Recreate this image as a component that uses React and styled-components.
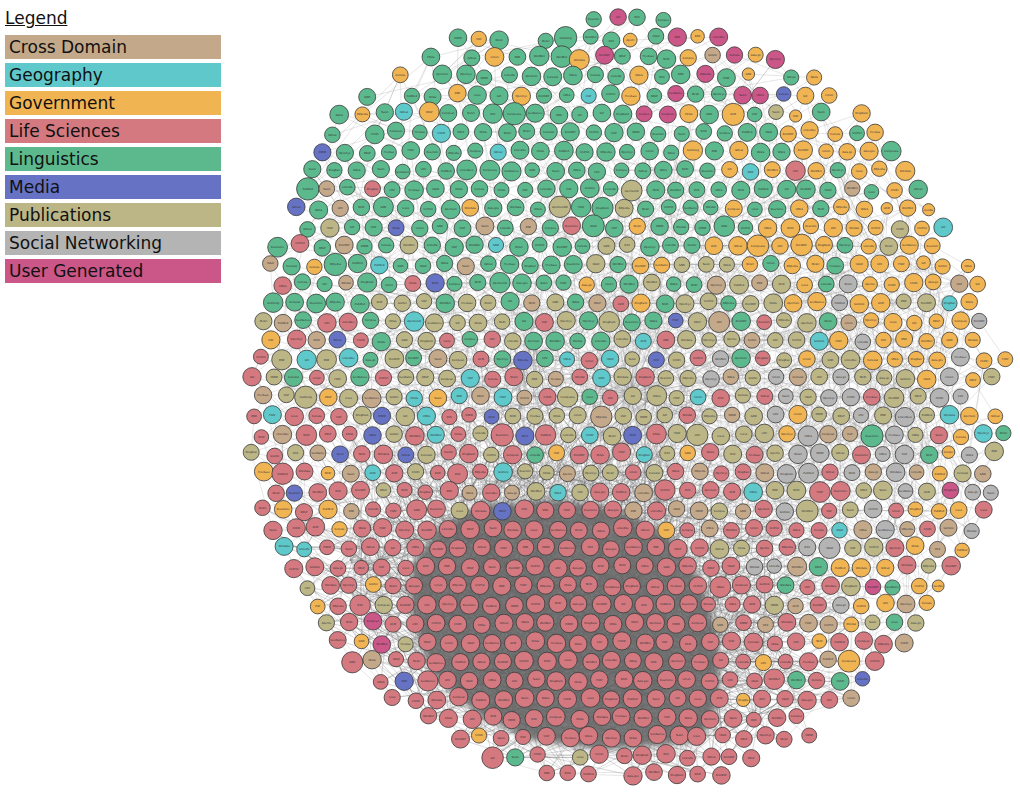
import { useMemo } from "react";
import styled, { createGlobalStyle } from "styled-components";

const GlobalStyle = createGlobalStyle`
  html, body {
    margin: 0;
    padding: 0;
    background: #fff;
  }
  body {
    font-family: "DejaVu Sans", Verdana, sans-serif;
  }
`;

const Page = styled.div`
  display: flex;
  width: 1020px;
  height: 793px;
  overflow: hidden;
  background: #fff;
`;

const Legend = styled.aside`
  flex: none;
  width: 230px;
  box-sizing: border-box;
  padding: 5px 0 0 5px;
  display: flex;
  flex-direction: column;
  gap: 4px;
`;

const LegendTitle = styled.div`
  font-size: 17px;
  line-height: 26px;
  color: #111;
  text-decoration: underline;
`;

const LegendRow = styled.div`
  width: 216px;
  height: 24px;
  box-sizing: border-box;
  padding-left: 4px;
  font-size: 17px;
  line-height: 25px;
  color: #111;
  background: ${(p) => p.$color};
  white-space: nowrap;
`;

const Chart = styled.svg`
  flex: none;
  display: block;
`;

const CATS = [
  { name: "Cross Domain", color: "#c4a88a" },
  { name: "Geography", color: "#5ec8cb" },
  { name: "Government", color: "#f1b453" },
  { name: "Life Sciences", color: "#d4797f" },
  { name: "Linguistics", color: "#5cb98d" },
  { name: "Media", color: "#6672c4" },
  { name: "Publications", color: "#bcb687" },
  { name: "Social Networking", color: "#b4b4b4" },
  { name: "User Generated", color: "#cb5688" },
];
const [CD, GEO, GOV, LS, LING, MED, PUB, SOC, UG] = [0, 1, 2, 3, 4, 5, 6, 7, 8];

// where each domain tends to sit in the layout: [cat, x, y, spreadX, spreadY, weight]
const ZONES = [
  [LING, 510, 165, 200, 105, 14],
  [LING, 800, 240, 60, 50, 2],
  [LING, 850, 600, 60, 60, 1],
  [GOV, 870, 165, 100, 120, 11],
  [GOV, 940, 330, 50, 80, 3],
  [GOV, 430, 60, 60, 35, 3],
  [GOV, 900, 580, 70, 90, 4],
  [GOV, 320, 600, 45, 70, 3],
  [UG, 690, 60, 40, 50, 6],
  [UG, 390, 620, 50, 50, 1],
  [PUB, 620, 370, 230, 72, 9],
  [PUB, 860, 610, 80, 90, 2],
  [PUB, 320, 640, 50, 80, 3],
  [CD, 560, 390, 260, 110, 1.5],
  [CD, 880, 610, 80, 80, 2.5],
  [CD, 330, 610, 50, 60, 1.5],
  [CD, 280, 290, 45, 70, 2.5],
  [LS, 525, 635, 220, 140, 13],
  [LS, 265, 460, 50, 100, 6],
  [SOC, 870, 440, 60, 80, 5],
  [SOC, 810, 520, 40, 50, 2],
  [GEO, 560, 330, 220, 110, 1.4],
  [GEO, 310, 580, 40, 60, 1.5],
  [MED, 440, 390, 220, 140, 0.8],
];
const BASE = [0.1, 0.06, 0.25, 0.1, 0.08, 0.05, 0.08, 0.06, 0.05];

const DARK = [
  [480, 505], [560, 500], [620, 510], [668, 534], [700, 578], [718, 636],
  [720, 696], [702, 742], [600, 750], [530, 740], [480, 716], [432, 674],
  [412, 620], [412, 565], [440, 525],
];
const HALO = [
  [430, 480], [600, 470], [720, 500], [790, 560], [790, 700], [730, 760],
  [560, 770], [440, 740], [360, 660], [330, 580], [370, 510],
];

const NAMES = [
  "DBpedia", "GeoNames", "Wikidata", "UniProt", "Bio2RDF", "lexvo", "DBLP",
  "FOAF", "LinkedGeo", "OpenCyc", "YAGO", "GND", "VIAF", "MeSH", "ChEBI",
  "KEGG", "OMIM", "Reactome", "PubMed", "BNB", "Europeana", "DrugBank",
  "Freebase", "LOV", "lemon", "WordNet", "ACM", "IEEE", "data.gov", "Eurostat",
  "GO", "NCBI", "Taxon", "ISOcat", "Glottolog", "WALS", "ApertiumRDF", "UMLS",
];

function makeRng(seed) {
  return () => {
    seed = (seed + 0x6d2b79f5) | 0;
    let t = Math.imul(seed ^ (seed >>> 15), 1 | seed);
    t = (t + Math.imul(t ^ (t >>> 7), 61 | t)) ^ t;
    return ((t ^ (t >>> 14)) >>> 0) / 4294967296;
  };
}

function inside(poly, x, y) {
  let hit = false;
  for (let i = 0, j = poly.length - 1; i < poly.length; j = i++) {
    const [xi, yi] = poly[i];
    const [xj, yj] = poly[j];
    if (yi > y !== yj > y && x < ((xj - xi) * (y - yi)) / (yj - yi) + xi) hit = !hit;
  }
  return hit;
}

function pickCat(rand, x, y, dark) {
  if (dark && rand() < 0.93) return LS;
  const w = BASE.slice();
  for (const [c, zx, zy, sx, sy, k] of ZONES) {
    const dx = (x - zx) / sx;
    const dy = (y - zy) / sy;
    w[c] += k * Math.exp(-(dx * dx + dy * dy) / 2);
  }
  const sum = w.reduce((a, b) => a + b, 0);
  let r = rand() * sum;
  for (let i = 0; i < w.length; i++) {
    r -= w[i];
    if (r <= 0) return i;
  }
  return LS;
}

function buildGraph() {
  const rand = makeRng(20141);
  const CY = 397;
  const RX = 383;
  const RY = 390;
  const D = 21.8;
  const H = D * 0.866;
  const nodes = [];
  const rows = Math.ceil(RY / H) + 1;
  for (let row = -rows; row <= rows; row++) {
    const y0 = CY + row * H;
    const off = row & 1 ? D / 2 : 0;
    // the cloud leans: its top sits left of its bottom
    const t = (CY - y0) / RY;
    const CX = 624 - (t > 0 ? 40 * t * t : 0);
    for (let x0 = CX - RX - D + off; x0 <= CX + RX + D; x0 += D) {
      const u = (x0 - CX) / RX;
      const v = (y0 - CY) / RY;
      const r = Math.hypot(u, v);
      const a = Math.atan2(v, u);
      const edge = 0.995 + 0.008 * Math.sin(a * 5 + 1);
      if (r > edge) continue;
      if (r > 0.93 && rand() < 0.18) continue;
      const j = r > 0.85 ? 5 : 3;
      const x = x0 + (rand() - 0.5) * j;
      const y = y0 + (rand() - 0.5) * j;
      const dark = inside(DARK, x, y);
      const cat = pickCat(rand, x, y, dark);
      let rad = 7.3 + rand() * 2.1;
      if (rand() < 0.08) rad += 1.8;
      if (cat === GOV && r > 0.75 && rand() < 0.35) rad -= 1.5;
      if (dark) rad = 8.4 + rand() * 1.0;
      const nm = NAMES[Math.floor(rand() * NAMES.length)];
      nodes.push({ x, y, rad, cat, dark, label: nm.slice(0, Math.max(3, Math.round(rad * 0.9))) });
    }
  }

  const near = (i, lim) => {
    const out = [];
    const a = nodes[i];
    for (let k = 0; k < nodes.length; k++) {
      if (k === i) continue;
      const b = nodes[k];
      const d = Math.hypot(a.x - b.x, a.y - b.y);
      if (d < lim && d > 12) out.push(k);
    }
    return out;
  };

  let light = "";
  let heavy = "";
  nodes.forEach((n, i) => {
    const inHalo = inside(HALO, n.x, n.y);
    const mid = n.y > 230 && n.y < 520 && n.x > 360 && n.x < 960;
    const count = n.dark ? 11 : inHalo ? 5 : mid ? 4 : 1 + Math.floor(rand() * 2);
    const lim = n.dark ? 200 : mid ? 180 : 110;
    const list = near(i, lim);
    for (let k = 0; k < count && list.length; k++) {
      const m = nodes[list[Math.floor(rand() * list.length)]];
      const seg = `M${n.x.toFixed(1)} ${n.y.toFixed(1)}L${m.x.toFixed(1)} ${m.y.toFixed(1)}`;
      if (n.dark || inHalo) heavy += seg;
      else light += seg;
    }
  });

  // hubs with many long links
  const hubs = [
    [630, 395, 240],
    [880, 400, 100],
    [760, 470, 100],
    [350, 560, 80],
    [600, 300, 70],
  ];
  let longs = "";
  for (const [hx, hy, cnt] of hubs) {
    for (let k = 0; k < cnt; k++) {
      const m = nodes[Math.floor(rand() * nodes.length)];
      if (Math.hypot(m.x - hx, m.y - hy) > 330) continue;
      longs += `M${hx} ${hy}L${m.x.toFixed(1)} ${m.y.toFixed(1)}`;
    }
  }
  return { nodes, light, heavy, longs };
}

const pts = (poly) => poly.map((p) => p.join(",")).join(" ");

function Cloud() {
  const { nodes, light, heavy, longs } = useMemo(buildGraph, []);
  return (
    <Chart width="790" height="793" viewBox="230 0 790 793">
      <defs>
        <filter id="soft" x="-10%" y="-10%" width="120%" height="120%">
          <feGaussianBlur stdDeviation="3" />
        </filter>
      </defs>
      <polygon points={pts(DARK)} fill="#797979" filter="url(#soft)" />
      <path d={longs} stroke="#8c8c8c" strokeWidth="0.4" opacity="0.4" fill="none" />
      <path d={light} stroke="#8e8e8e" strokeWidth="0.45" opacity="0.5" fill="none" />
      <path d={heavy} stroke="#666" strokeWidth="0.5" opacity="0.5" fill="none" />
      {nodes.map((n, i) => (
        <g key={i}>
          <circle
            cx={n.x.toFixed(1)}
            cy={n.y.toFixed(1)}
            r={n.rad.toFixed(1)}
            fill={CATS[n.cat].color}
            stroke="#3b3b3b"
            strokeOpacity="0.8"
            strokeWidth="1"
          />
          <text
            x={n.x.toFixed(1)}
            y={(n.y + 0.9).toFixed(1)}
            fontSize="2.6"
            fontFamily="DejaVu Sans, sans-serif"
            textAnchor="middle"
            fill="#333"
          >
            {n.label}
          </text>
        </g>
      ))}
    </Chart>
  );
}

export default function App() {
  return (
    <Page>
      <GlobalStyle />
      <Legend>
        <LegendTitle>Legend</LegendTitle>
        {CATS.map((c) => (
          <LegendRow key={c.name} $color={c.color}>
            {c.name}
          </LegendRow>
        ))}
      </Legend>
      <Cloud />
    </Page>
  );
}
